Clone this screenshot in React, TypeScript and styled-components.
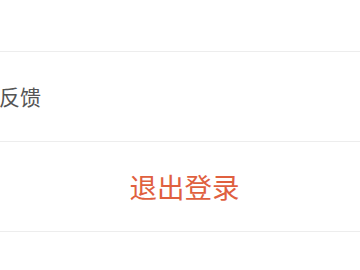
import styled, { createGlobalStyle } from 'styled-components'

const GlobalStyle = createGlobalStyle`
    html, body {
        margin: 0;
        padding: 0;
        background: #ffffff;
        font-family: "Noto Sans CJK SC", "Noto Sans", sans-serif;
    }
`

export default function App() {
    return (
        <>
            <GlobalStyle />
            <Page>
                <Row />
                <Row>
                    <Label>反馈</Label>
                </Row>
                <Row>
                    <Logout>退出登录</Logout>
                </Row>
                <Row />
            </Page>
        </>
    )
}

const Page = styled.div`
    display: flex;
    flex-direction: column;
    width: 360px;
    height: 270px;
    overflow: hidden;
    margin-top: -38px;
`

const Row = styled.div`
    display: flex;
    align-items: center;
    height: 89px;
    flex-shrink: 0;
    border-bottom: 1px solid #ededed;
    box-sizing: content-box;
    &:last-child {
        border-bottom: none;
    }
`

const Label = styled.span`
    font-size: 21px;
    color: #555555;
    line-height: 1;
    margin-left: -1px;
`

const Logout = styled.button`
    flex: 1;
    border: none;
    background: none;
    padding: 0 0 0 9px;
    font-family: inherit;
    font-size: 27.5px;
    line-height: 1;
    color: #e0603f;
    text-align: center;
`
